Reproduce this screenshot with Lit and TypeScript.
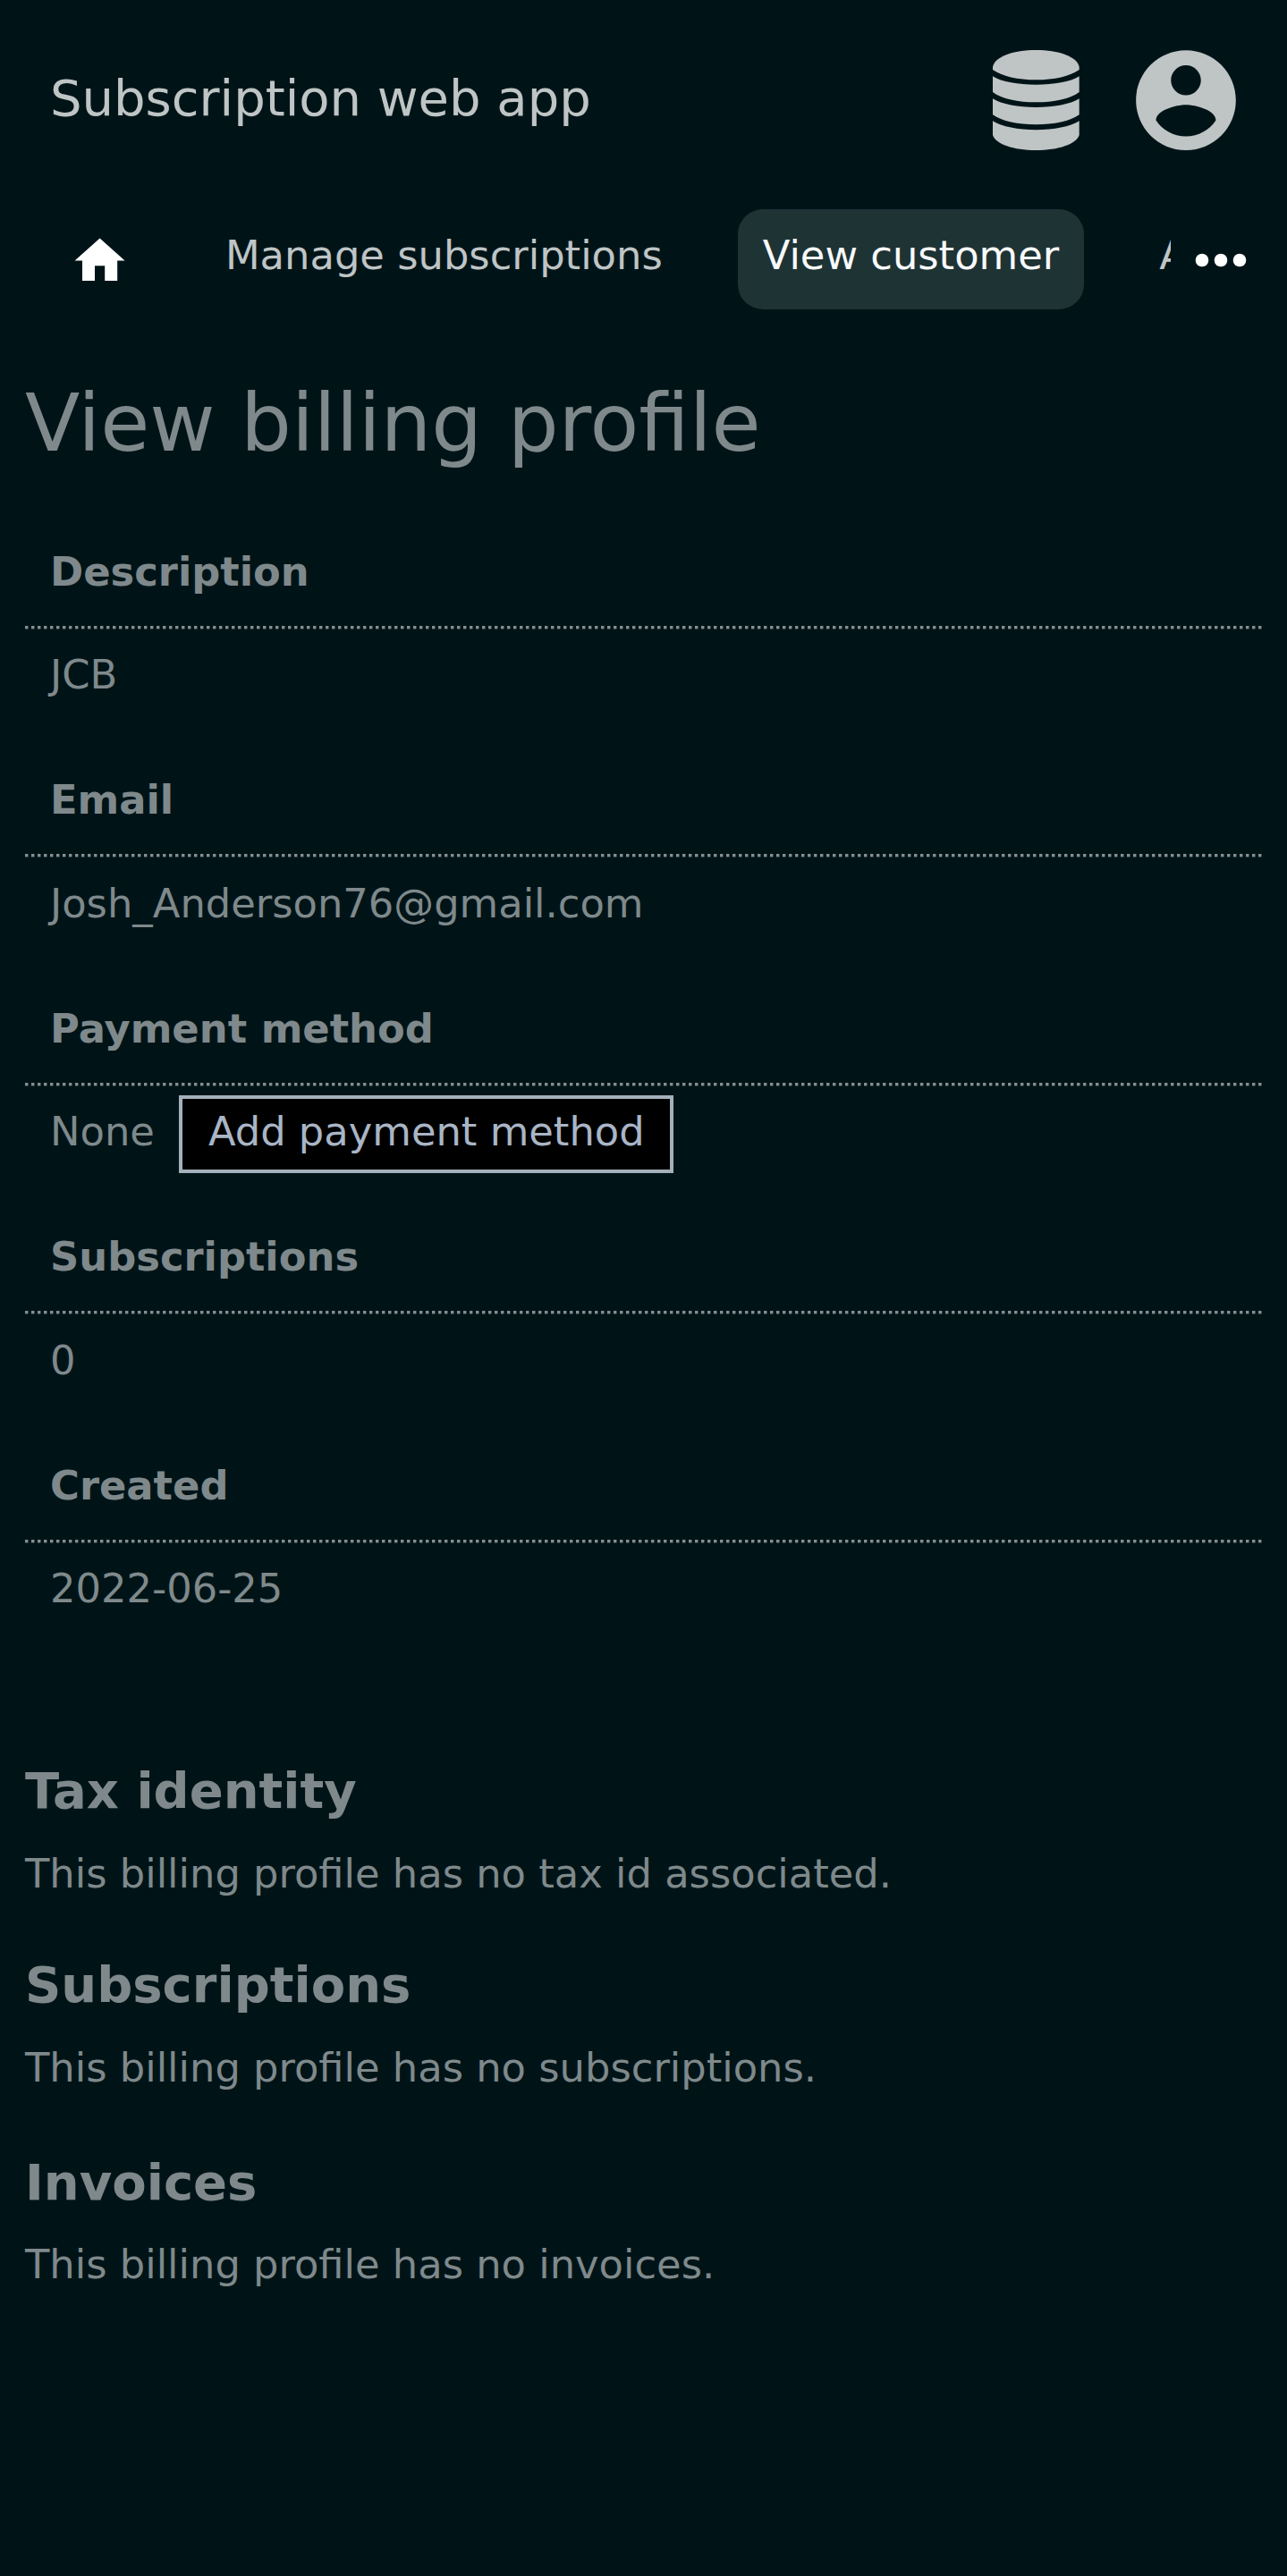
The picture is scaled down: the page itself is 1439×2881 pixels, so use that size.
import { LitElement, html, css, svg } from "lit";
import { customElement } from "lit/decorators.js";
import { classMap } from "lit/directives/class-map.js";

interface Field { label: string; value: string; action?: string }
interface Section { title: string; text: string }

const FIELDS: Field[] = [
  { label: "Description", value: "JCB" },
  { label: "Email", value: "Josh_Anderson76@gmail.com" },
  { label: "Payment method", value: "None", action: "Add payment method" },
  { label: "Subscriptions", value: "0" },
  { label: "Created", value: "2022-06-25" },
];

const SECTIONS: Section[] = [
  { title: "Tax identity", text: "This billing profile has no tax id associated." },
  { title: "Subscriptions", text: "This billing profile has no subscriptions." },
  { title: "Invoices", text: "This billing profile has no invoices." },
];

const TABS = [
  { label: "Manage subscriptions", active: false },
  { label: "View customer", active: true },
  { label: "Add customer", active: false },
];

const database = svg`
  <path d="M0 56C8 21 70 0 145 0S282 21 290 56V66C260 88 205 100 145 100S30 88 0 66Z"/>
  <path d="M0 88C30 107 85 116 145 116S260 107 290 88V141C260 164 205 175 145 175S30 164 0 141Z"/>
  <path d="M0 163C30 182 85 192 145 192S260 182 290 163V217C260 239 205 250 145 250S30 239 0 217Z"/>
  <path d="M0 238C30 257 85 268 145 268S260 257 290 238V285C280 316 220 336 145 336S10 316 0 285Z"/>`;

@customElement("app-root")
export class AppRoot extends LitElement {
  static styles = css`
    :host {
      display: block;
      box-sizing: border-box;
      height: 2881px;
      overflow: hidden;
      background: #001418;
      color: #7f898b;
      font: 44.8px/52px "DejaVu Sans", sans-serif;
    }
    h1, h2, p, dl, dt, dd { margin: 0; }
    svg { display: block; fill: currentColor; flex: none; }
    .header {
      display: flex;
      align-items: center;
      height: 224px;
      padding: 0 45.6px 0 56px;
      box-sizing: border-box;
      color: #bfc4c5;
    }
    .title { flex: 1; font-size: 56px; line-height: 66px; padding-bottom: 4px; }
    .database { width: 96.7px; height: 112px; margin-right: 52.3px; }
    .account { width: 134px; height: 134.4px; }
    .nav { display: flex; height: 134px; color: #bfc4c5; }
    .home { width: 67.2px; height: 67.2px; margin: 34px 0 0 78.4px; color: #fff; }
    .tabs {
      display: flex;
      gap: 57.4px;
      width: 1084.8px;
      margin-left: 79.1px;
      padding-top: 10.2px;
      overflow: hidden;
    }
    .tab {
      flex: none;
      box-sizing: border-box;
      height: 112px;
      padding: 25.8px 27.3px 0;
      border-radius: 28px;
      white-space: nowrap;
    }
    .active { background: #1e3334; color: #f8f9fb; }
    .more { width: 60px; height: 20px; margin: 56.5px 0 0 25.8px; color: #fff; }
    .main { padding: 0 28px; }
    h1 { font-size: 89.6px; line-height: 104px; font-weight: 400; padding-top: 63px; }
    .fields { height: 1366px; padding-top: 88.7px; box-sizing: border-box; }
    .field { height: 255.5px; }
    dt { font-weight: 700; padding: 0 28px 34.3px; }
    .rule {
      height: 4px;
      background: repeating-linear-gradient(90deg, #848e91 0 3px, #39484b 3px 4px, transparent 4px 7px);
      -webkit-mask: linear-gradient(#000 0 3px, rgba(0, 0, 0, 0.4) 3px 4px);
      mask: linear-gradient(#000 0 3px, rgba(0, 0, 0, 0.4) 3px 4px);
    }
    dd { display: flex; padding: 25.3px 28px 0; }
    .button {
      display: block;
      box-sizing: border-box;
      height: 87.5px;
      margin: -15.3px 0 0 27px;
      padding: 11px 28px 16.5px 29px;
      font: inherit;
      color: #a9b5c5;
      background: #000;
      border: 4px solid #a4b0bb;
      border-radius: 0;
    }
    .sections { padding-top: 79px; }
    h2 { font-size: 56px; line-height: 66px; font-weight: 700; }
    h2:last-of-type { margin-top: 3.5px; }
    .text { padding: 33.5px 0 65.5px; }
  `;

  render() {
    return html`
      <header class="header">
        <div class="title">Subscription web app</div>
        <svg class="database" viewBox="0 0 290 336" preserveAspectRatio="none">${database}</svg>
        <svg class="account" viewBox="0 0 24 24">
          <path d="M12 2C6.48 2 2 6.48 2 12s4.48 10 10 10 10-4.48 10-10S17.52 2 12 2zm0 3c1.66 0 3 1.34 3 3s-1.34 3-3 3-3-1.34-3-3 1.34-3 3-3zm0 14.2c-2.5 0-4.71-1.28-6-3.22.03-1.99 4-3.08 6-3.08 1.99 0 5.97 1.09 6 3.08-1.29 1.94-3.5 3.22-6 3.22z"/>
        </svg>
      </header>
      <nav class="nav">
        <svg class="home" viewBox="0 0 24 24"><path d="M10 20v-6h4v6h5v-8h3L12 3 2 12h3v8z"/></svg>
        <div class="tabs">
          ${TABS.map((t) => html`<div class=${classMap({ tab: true, active: t.active })}>${t.label}</div>`)}
        </div>
        <svg class="more" viewBox="0 0 60 20">
          <circle cx="9" cy="10" r="7.3"/><circle cx="30" cy="10" r="7.3"/><circle cx="51" cy="10" r="7.3"/>
        </svg>
      </nav>
      <main class="main">
        <h1>View billing profile</h1>
        <dl class="fields">
          ${FIELDS.map((f) => html`
            <div class="field">
              <dt>${f.label}</dt>
              <div class="rule"></div>
              <dd>${f.value}${f.action ? html`<button class="button">${f.action}</button>` : ""}</dd>
            </div>`)}
        </dl>
        <div class="sections">
          ${SECTIONS.map((s) => html`<h2>${s.title}</h2><p class="text">${s.text}</p>`)}
        </div>
      </main>
    `;
  }
}
